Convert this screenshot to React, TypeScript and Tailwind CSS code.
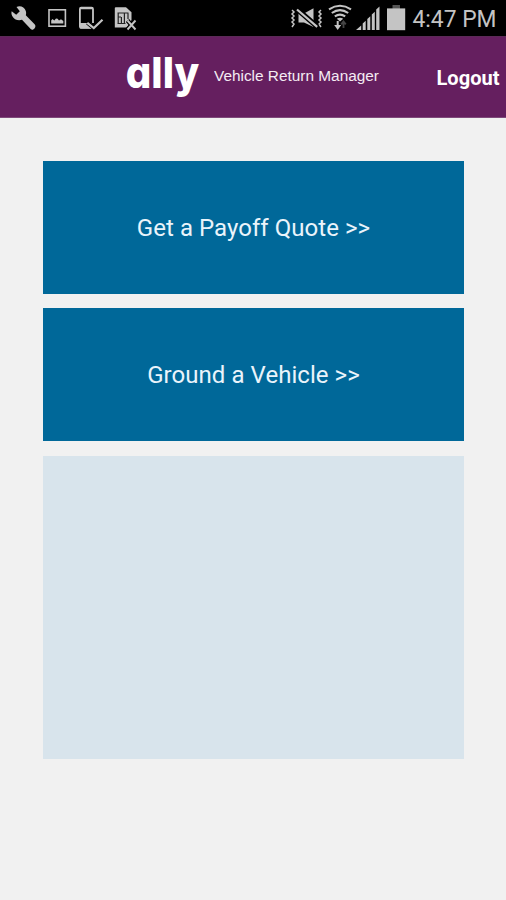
import type { ReactNode } from 'react'

const actions = ['Get a Payoff Quote >>', 'Ground a Vehicle >>']

interface GlyphProps {
  width: number
  className?: string
  children: ReactNode
}

function Glyph({ width, className = '', children }: GlyphProps) {
  return (
    <svg
      width={width}
      height="36"
      viewBox={`0 0 ${width} 36`}
      fill="none"
      className={`shrink-0 ${className}`}
    >
      {children}
    </svg>
  )
}

function StatusBar() {
  return (
    <div className="h-9 bg-black flex items-center justify-between pl-2.5 text-[#c4c4c4]">
      <div className="flex items-center">
        {/* wrench */}
        <Glyph width={26}>
          <path
            d="M6.5 7C10 5 14.6 7 15.8 11C16.3 12.7 16.2 14 15.8 15.3L24.6 24.2C25.8 25.4 25.6 26.8 24.6 28.2C23.4 29.8 22 30.2 20.7 29L12 19.8C8.2 21 3.9 19.6 2.2 16C1.4 14.2 1.2 12.8 1.7 11.2L6.2 14.8L9.8 11.2Z"
            fill="currentColor"
          />
        </Glyph>
        {/* picture */}
        <Glyph width={19} className="ml-3">
          <rect x="1" y="9.8" width="16.4" height="16.4" stroke="currentColor" strokeWidth="1.6" />
          <path d="M3.2 23.6V20.4L4.5 19L6.3 20.4L8 18.5L9.6 18.7L11 20.6L13 19.2L15.3 21V23.6Z" fill="currentColor" />
        </Glyph>
        {/* device check */}
        <Glyph width={25} className="ml-3">
          <path d="M14 23V9Q14 7.6 12.6 7.6H2.2Q.9 7.6 .9 9V26.4Q.9 27.8 2.2 27.8H12" stroke="currentColor" strokeWidth="1.8" />
          <path d="M1 23H13V28.4H1ZM1 7H14V9.2H1Z" fill="currentColor" />
          <path d="M8.5 22.6L14.8 27.8L23.3 19.7" stroke="#000" strokeWidth="4.4" />
          <path d="M8.3 22.8L14.8 28L23.5 19.8" stroke="currentColor" strokeWidth="2.2" />
        </Glyph>
        {/* sim error */}
        <Glyph width={23} className="ml-2.5">
          <path d="M.8 27.4V8Q.8 7.2 1.8 7.2H12L17.5 12.2V20L13 27.4Z" fill="currentColor" />
          <path d="M3.5 13H14.5M4.2 13.5V23.5M7.4 17V23M10.4 13.5V23.5M14 13.5V19M4.5 17H7M3.5 23.5H11.5" stroke="#222" strokeWidth="1.2" />
          <path d="M13.5 20.5L21.5 29.5M21.5 20.5L13.5 29.5" stroke="#000" strokeWidth="4.4" />
          <path d="M13.5 20.5L21.5 29.5M21.5 20.5L13.5 29.5" stroke="currentColor" strokeWidth="1.9" />
        </Glyph>
      </div>

      <div className="flex items-center">
        {/* vibrate, muted */}
        <Glyph width={34}>
          <path d="M2 10L4 12L2 14L4 16L2 18L4 20L2 22L4 24L2 27M31 10L29 12L31 14L29 16L31 18L29 20L31 22L29 24L31 27" stroke="currentColor" strokeWidth="1.5" />
          <path d="M8.5 13.5H14L23.5 8.3V27L14 22.5H8.5Z" fill="currentColor" />
          <path d="M7.5 9.5L27 26.5" stroke="#000" strokeWidth="5.2" />
          <path d="M7 9.5L27.2 26.8" stroke="currentColor" strokeWidth="2.2" />
        </Glyph>
        {/* wifi */}
        <Glyph width={25} className="ml-1">
          <path d="M1 9.3Q12 2.2 23 9.3M3.8 13Q12 7.2 20.2 13M6.8 16.4Q12 12.8 17.2 16.4" stroke="currentColor" strokeWidth="2.1" />
          <path d="M8.8 18.7Q12 16.6 15.2 18.7L12 21.6Z" fill="currentColor" />
          <path d="M9.7 21V27" stroke="currentColor" strokeWidth="2" />
          <path d="M6.2 25H13.2L9.7 30Z" fill="currentColor" />
          <path d="M15.5 28V22M13.2 24.4L15.5 21.4L17.8 24.4" stroke="#444" strokeWidth="1.8" />
        </Glyph>
        {/* signal */}
        <Glyph width={25} className="ml-[3px]">
          <path d="M0 30L5.2 25.4V30ZM6.7 30V23.6L9.7 20.8V30ZM11.3 30V19L14.3 16.2V30ZM15.8 30V14.6L18.8 11.8V30ZM20.2 30V9.6L23.5 6.6V30Z" fill="currentColor" />
        </Glyph>
        {/* battery */}
        <Glyph width={20} className="ml-[5px]">
          <rect x="6.5" y="5" width="7.5" height="4" fill="#555" />
          <rect x="1" y="8.4" width="18.2" height="21.8" fill="currentColor" />
        </Glyph>
        <svg width="94" height="36" className="ml-1.5 shrink-0">
          <text
            x="0.5"
            y="27"
            textLength="84"
            lengthAdjust="spacingAndGlyphs"
            fill="#c4c4c4"
            className="font-['Roboto',sans-serif] text-[24px]"
          >
            4:47 PM
          </text>
        </svg>
      </div>
    </div>
  )
}

function Header() {
  return (
    <header className="h-[82px] bg-[#651f5f] border-t border-t-[#5b2a57] border-b border-b-[#7f4a7b] flex items-center text-white">
      <svg width="86" height="80" className="ml-[120px] shrink-0" aria-label="ally">
        <text
          x="5.8"
          y="50.8"
          textLength="73.5"
          lengthAdjust="spacingAndGlyphs"
          fill="currentColor"
          className="font-['Inter',sans-serif] font-extrabold text-[43px] [font-feature-settings:'cv11']"
        >
          ally
        </text>
      </svg>
      <svg width="170" height="80" className="ml-2 shrink-0">
        <text
          x="0"
          y="44"
          textLength="165"
          lengthAdjust="spacingAndGlyphs"
          fill="#f4ebf3"
          className="font-['Liberation_Sans',sans-serif] text-[15.5px]"
        >
          Vehicle Return Manager
        </text>
      </svg>
      <button className="ml-auto pt-1.5">
        <svg width="70" height="28">
          <text
            x="0.5"
            y="19"
            textLength="63"
            lengthAdjust="spacingAndGlyphs"
            fill="currentColor"
            className="font-['Roboto',sans-serif] font-bold text-[20px]"
          >
            Logout
          </text>
        </svg>
      </button>
    </header>
  )
}

export default function App() {
  return (
    <div className="w-[506px] h-[900px] overflow-hidden bg-[#f1f1f1] font-['Roboto',sans-serif]">
      <StatusBar />
      <Header />
      <main className="pt-[43px] pl-[43px] pr-[42px] flex flex-col">
        {actions.map(label => (
          <button
            key={label}
            className="h-[133px] mb-3.5 last-of-type:mb-[15px] pt-px bg-[#006899] text-[#eaf4fb] text-2xl tracking-[0.05px] flex items-center justify-center"
          >
            {label}
          </button>
        ))}
        <div className="h-[303px] bg-[#d8e4ec]" />
      </main>
    </div>
  )
}
